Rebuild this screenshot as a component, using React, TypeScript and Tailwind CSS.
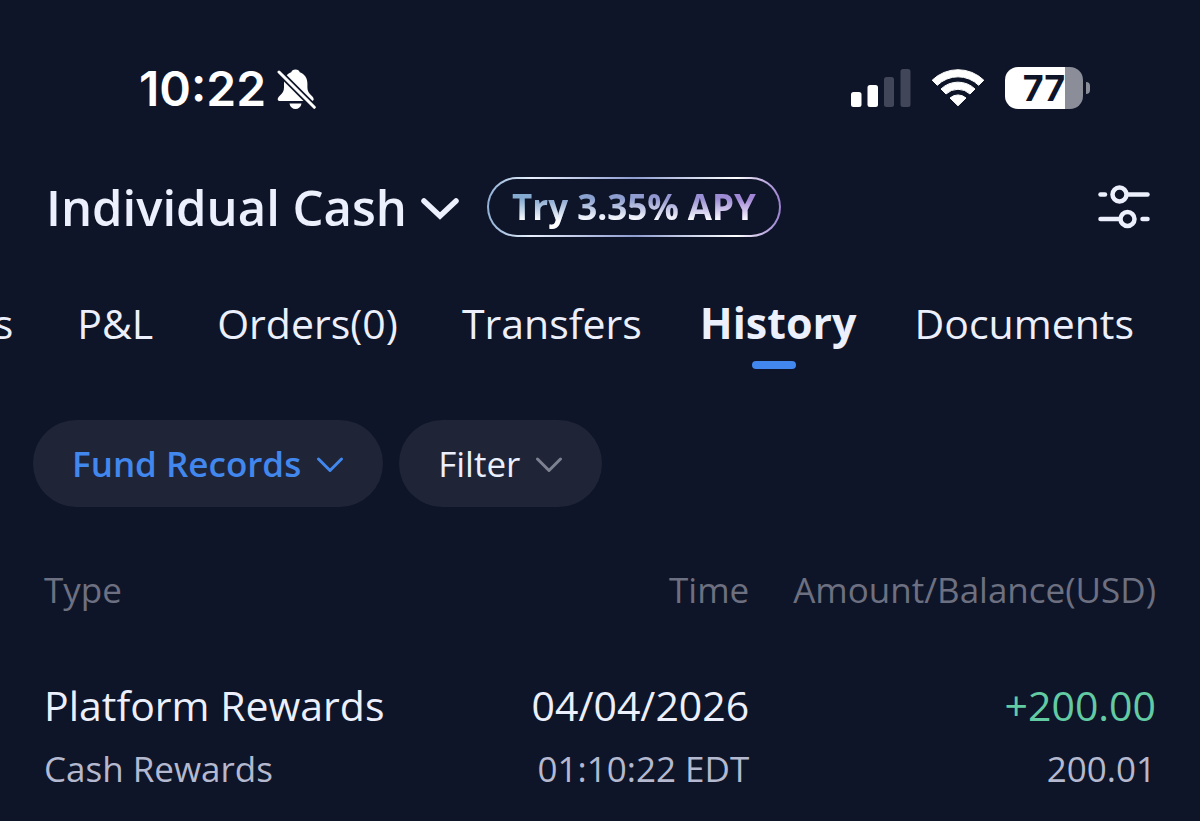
import React from "react";

const tabs = ["Positions", "P&L", "Orders(0)", "Transfers", "History", "Documents"];

const records = [
  {
    type: "Platform Rewards",
    detail: "Cash Rewards",
    date: "04/04/2026",
    time: "01:10:22 EDT",
    amount: "+200.00",
    balance: "200.01",
  },
];

const BellOff = () => (
  <svg width="40" height="44" viewBox="0 0 40 44" fill="none" aria-hidden="true">
    <path
      d="M18.500 2.500c-2.400 0-3.800 1.200-4.300 2.800C9.300 7.300 7 11 7 16.500v4c0 3.500-1.500 5.500-4 8-1.500 1.500-2.300 2.700-2.300 3.700 0 1.200.8 1.800 2.200 1.800h31.600c1.400 0 2.200-.6 2.200-1.800 0-1-.8-2.200-2.300-3.700-2.500-2.500-4-4.500-4-8v-4c0-5.500-2.700-9.200-7.600-11.200-.5-1.600-1.900-2.800-4.300-2.800Z"
      fill="#fff"
    />
    <path d="M12.500 36.500h12c-.6 3.600-3 5.500-6 5.500s-5.400-1.900-6-5.500Z" fill="#fff" />
    <path d="M1.500 4.500 37.500 40.500" stroke="#0f1528" strokeWidth="6.500" />
    <path d="M2 5 37.300 40.300" stroke="#fff" strokeWidth="3" strokeLinecap="round" />
  </svg>
);

const Signal = () => (
  <svg width="60" height="38" viewBox="0 0 60 38" aria-hidden="true">
    <rect x="0" y="23" width="10.500" height="15" rx="2.500" fill="#fff" />
    <rect x="16.500" y="16" width="10.500" height="22" rx="2.500" fill="#fff" />
    <rect x="33" y="8" width="10" height="30" rx="2.500" fill="#414658" />
    <rect x="49.500" y="0" width="10" height="38" rx="2.500" fill="#414658" />
  </svg>
);

const Wifi = () => (
  <svg width="54" height="40" viewBox="0 0 54 40" fill="#fff" stroke="#fff" strokeLinejoin="round" aria-hidden="true">
    <path d="M1.200 12.200A37 37 0 0 1 52.800 12.200L47.700 17.300A29.500 29.500 0 0 0 6.300 17.300Z" />
    <path d="M10 21A24.500 24.500 0 0 1 44 21L39 26A17.500 17.500 0 0 0 15 26Z" />
    <path d="M19 30A12 12 0 0 1 35 30L27 37.800Z" />
  </svg>
);

const Battery = () => (
  <div className="flex items-center gap-[3px]">
    <div className="flex h-[42px] w-[78px] items-center justify-center rounded-[13px] bg-[linear-gradient(to_right,#fff_77%,#8b8e98_77%)] font-[Inter,sans-serif] text-[36px] leading-[42px] font-bold text-[#0f1528]">
      77
    </div>
    <div className="h-3 w-1 rounded-r-full bg-[#8b8e98]" />
  </div>
);

const Chevron = () => (
  <svg width="28" height="16" viewBox="0 0 28 16" fill="none" aria-hidden="true">
    <path d="M2.500 2 14 13.500 25.500 2" stroke="currentColor" strokeWidth="3" strokeLinecap="round" strokeLinejoin="round" />
  </svg>
);

const Sliders = () => (
  <svg width="52" height="44" viewBox="0 0 52 44" fill="none" stroke="#eceffc" strokeWidth="4.500" strokeLinecap="round" aria-hidden="true">
    <path d="M2.500 9.500H7" />
    <circle cx="21.500" cy="9.500" r="7" />
    <path d="M30 9.500H49.500" />
    <path d="M2.500 34H21" />
    <circle cx="29.500" cy="34" r="7" />
    <path d="M44.500 34H49.500" />
  </svg>
);

const StatusBar = () => (
  <header className="flex h-[176px] items-center justify-between pr-[110px] pl-[139px]">
    <div className="flex items-center gap-[11px] pt-0.5">
      <time className="font-[Inter,sans-serif] text-[48px] leading-14 font-semibold text-white">10:22</time>
      <BellOff />
    </div>
    <div className="flex items-center gap-5">
      <Signal />
      <Wifi />
      <Battery />
    </div>
  </header>
);

const App = () => {
  return (
    <div className="min-h-screen overflow-hidden bg-[#0f1528] font-['Open_Sans',sans-serif] text-[#eceffc]">
      <StatusBar />

      <section className="flex h-[62px] items-center justify-between pr-[50px] pl-[46px]">
        <div className="flex items-center gap-7">
          <button className="flex items-center gap-3.5 text-[49px] leading-[60px] font-semibold whitespace-nowrap">
            Individual Cash
            <svg width="38" height="26" viewBox="0 0 38 26" fill="none" aria-hidden="true">
              <path d="M3 7 19 22 35 7" stroke="currentColor" strokeWidth="5.500" strokeLinecap="round" />
            </svg>
          </button>
          <button className="rounded-full bg-[linear-gradient(to_right,#8fb0d6,#e8f0fc_15%,#8e9cd0_50%,#fff_85%,#9a7fd0)] p-[2px]">
            <span className="block rounded-full bg-[#0f1528] px-[23px]">
              <span className="block bg-[linear-gradient(to_top,#fff_25%,transparent_65%),linear-gradient(to_right,#84abd0,#8e9ccf_50%,#a284d6)] bg-clip-text text-[35px] leading-14 font-bold whitespace-nowrap text-transparent">
                Try 3.35% APY
              </span>
            </span>
          </button>
        </div>
        <button aria-label="Display settings">
          <Sliders />
        </button>
      </section>

      <nav className="mt-[55px] flex items-start justify-end gap-16 overflow-hidden pr-[66px]">
        {tabs.map((tab) => (
          <a
            key={tab}
            href="#"
            aria-current={tab === "History" ? "page" : undefined}
            className="group flex flex-col items-center text-[41px] leading-[60px] whitespace-nowrap aria-[current=page]:-mx-1.5 aria-[current=page]:text-[43px] aria-[current=page]:font-bold"
          >
            {tab}
            <span className="mt-2 mr-2 h-2 w-11 rounded-full group-aria-[current=page]:bg-[#4187ed]" />
          </a>
        ))}
      </nav>

      <div className="mt-[51px] flex gap-4 px-[33px]">
        <button className="flex h-[87px] items-center gap-[15px] rounded-full bg-[#1f2437] px-[39px] pt-0.5 text-[35px] font-semibold text-[#4187ed]">
          Fund Records
          <Chevron />
        </button>
        <button className="flex h-[87px] items-center gap-[15px] rounded-full bg-[#1f2437] px-[39px] pt-0.5 text-[35px]">
          Filter
          <span className="text-[#7d8190]">
            <Chevron />
          </span>
        </button>
      </div>

      <div className="mt-[59px] px-11">
        <table className="w-full text-right whitespace-nowrap">
          <thead className="text-[35px] leading-12 text-[#6d7080]">
            <tr>
              <th className="pb-[59px] text-left font-normal">Type</th>
              <th className="pb-[59px] font-normal">Time</th>
              <th className="w-px pb-[59px] pl-11 font-normal">Amount/Balance(USD)</th>
            </tr>
          </thead>
          <tbody className="text-[41px] leading-16">
            {records.map((r) => (
              <tr key={r.date + r.time}>
                <td className="text-left">
                  {r.type}
                  <div className="text-[35px] text-[#b5b9cf]">{r.detail}</div>
                </td>
                <td>
                  {r.date}
                  <div className="text-[35px] text-[#b5b9cf]">{r.time}</div>
                </td>
                <td className="text-[#62cba4]">
                  {r.amount}
                  <div className="text-[35px] text-[#b5b9cf]">{r.balance}</div>
                </td>
              </tr>
            ))}
          </tbody>
        </table>
      </div>
    </div>
  );
};

export default App;
